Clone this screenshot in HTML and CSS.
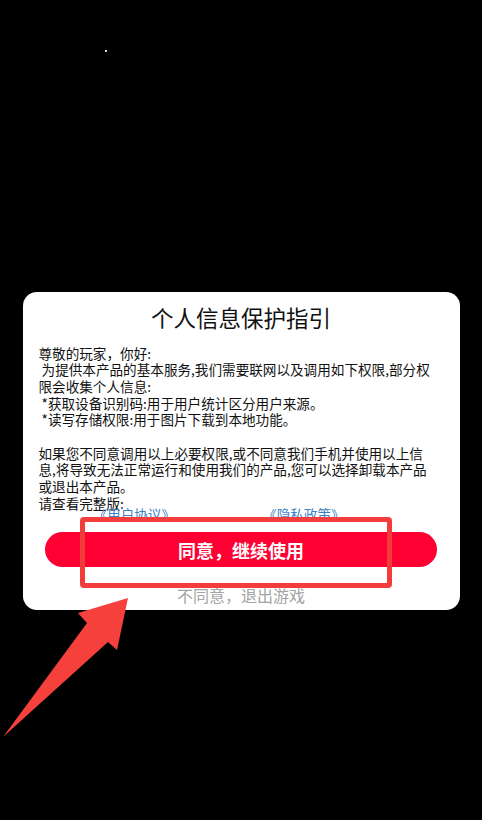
FILE: index.html
```html
<!DOCTYPE html>
<html lang="zh-CN">
<head>
    <meta charset="UTF-8">
    <meta name="viewport" content="width=device-width, initial-scale=1.0">
    <title>个人信息保护指引</title>
    <link rel="stylesheet" href="styles.css">
</head>
<body>
    <span class="dot"></span>

    <div class="dialog">
        <h1>个人信息保护指引</h1>

        <div class="content">
            <p>尊敬的玩家，你好:</p>
            <p>&nbsp;为提供本产品的基本服务,我们需要联网以及调用如下权限,部分权<br>限会收集个人信息:</p>
            <p>&nbsp;*获取设备识别码:用于用户统计区分用户来源。</p>
            <p>&nbsp;*读写存储权限:用于图片下载到本地功能。</p>
            <p class="blank">&nbsp;</p>
            <p>如果您不同意调用以上必要权限,或不同意我们手机并使用以上信<br>息,将导致无法正常运行和使用我们的产品,您可以选择卸载本产品<br>或退出本产品。</p>
            <p>请查看完整版:</p>
            <div class="links">
                <a href="#">《用户协议》</a>
                <a href="#">《隐私政策》</a>
            </div>
        </div>

        <button class="agree">同意，继续使用</button>
        <div class="refuse">不同意，退出游戏</div>

        <!-- annotation box around the button -->
        <div class="mark-box"></div>
    </div>

    <!-- annotation arrow -->
    <svg class="mark-arrow" width="135" height="150" viewBox="0 0 135 150">
        <polygon points="128,8 117,60 108,52 3,147 87,33 78,23" fill="#f5403c"/>
    </svg>
</body>
</html>
```

FILE: styles.css
```css
:root {
    --red: #ff0033;
    --mark: #f23d3c;
    --text: #111111;
    --text-light: #a3a3a3;
    --link: #3b7fc4;
}

* {
    margin: 0;
    padding: 0;
    box-sizing: border-box;
}

body {
    background: #000;
    min-height: 820px;
    padding-top: 292px;
    font-family: "Noto Sans CJK SC", "Noto Sans", sans-serif;
    color: var(--text);
    position: relative;
}

.dot {
    position: absolute;
    left: 105px;
    top: 50px;
    width: 2px;
    height: 2px;
    background: #ddd;
}

.dialog {
    position: relative;
    width: 437px;
    height: 318px;
    margin: 0 auto;
    padding-top: 9px;
    background: #fff;
    border-radius: 14px;
}

h1 {
    font-size: 22.5px;
    font-weight: 400;
    line-height: 32px;
    text-align: center;
}

.content {
    margin-top: 11.5px;
    height: 175.5px;
    padding-left: 16px;
    overflow: hidden;
    font-size: 13.6px;
    line-height: 16.67px;
    white-space: nowrap;
}

.links {
    display: flex;
    gap: 88px;
    padding-left: 55px;
    margin-top: -5px;
}

.links a {
    color: var(--link);
    text-decoration: none;
}

.agree {
    display: block;
    width: 392px;
    height: 35px;
    margin: 12px auto 0;
    border: none;
    border-radius: 18px;
    background: var(--red);
    color: #fff;
    font-family: inherit;
    font-size: 18px;
    font-weight: 700;
    cursor: pointer;
}

.refuse {
    margin-top: 17px;
    text-align: center;
    font-size: 16px;
    line-height: 22px;
    color: var(--text-light);
}

.mark-box {
    position: absolute;
    left: 57px;
    top: 225px;
    width: 312px;
    height: 71px;
    border: 5px solid var(--mark);
    border-radius: 4px;
}

.mark-arrow {
    position: absolute;
    left: 0;
    top: 590px;
}
```
